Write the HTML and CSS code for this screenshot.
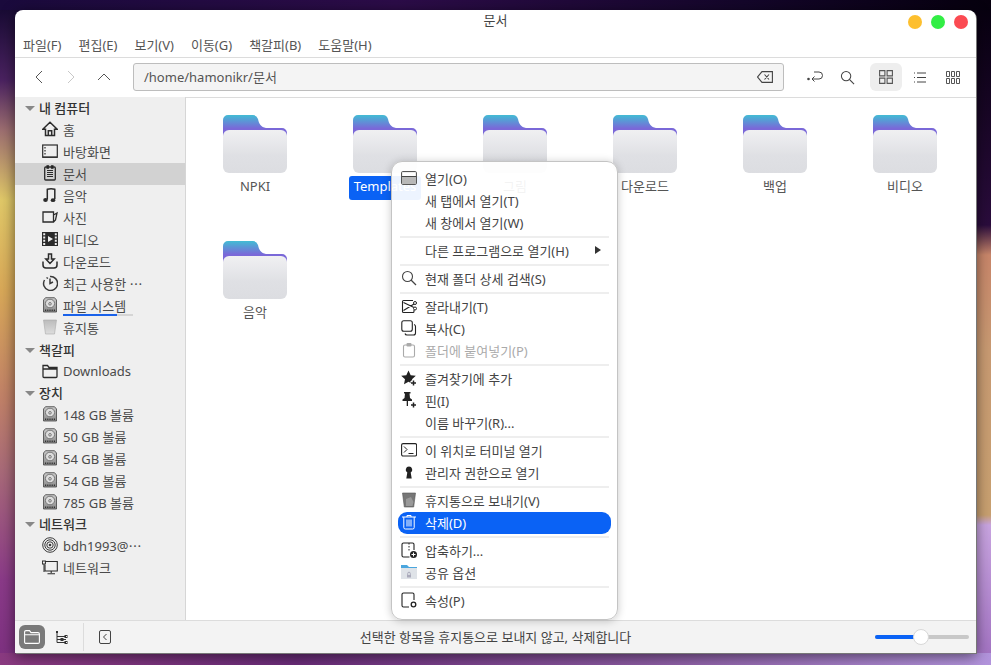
FILE: index.html
```html
<!DOCTYPE html>
<html lang="ko">
<head>
<meta charset="utf-8">
<title>문서</title>
<link rel="stylesheet" href="styles.css">
</head>
<body>
<svg class="defs" width="0" height="0" aria-hidden="true">
  <defs>
    <linearGradient id="tabg" x1="0" y1="0" x2="0" y2="1"><stop offset="0" stop-color="#42bcd4"/><stop offset=".42" stop-color="#7a68d8"/></linearGradient>
    <linearGradient id="frontg" x1="0" y1="0" x2="0" y2="1"><stop offset="0" stop-color="#f0f0f2"/><stop offset=".6" stop-color="#dfe0e4"/><stop offset="1" stop-color="#dcdde1"/></linearGradient>
    <linearGradient id="diskg" x1="0" y1="0" x2="0" y2="1"><stop offset="0" stop-color="#c8c8c8"/><stop offset="1" stop-color="#8a8a8a"/></linearGradient>
    <linearGradient id="trashg" x1="0" y1="0" x2="0" y2="1"><stop offset="0" stop-color="#bbb"/><stop offset="1" stop-color="#ddd"/></linearGradient>
    <symbol id="folder" viewBox="0 0 64 58">
      <path fill="url(#tabg)" d="M0 5a5 5 0 0 1 5-5h24a6 6 0 0 1 6 4c1 5 3 8 8 9h16a5 5 0 0 1 5 5v14H0z"/>
      <rect y="15" width="64" height="43" rx="6" fill="url(#frontg)"/>
    </symbol>
    <symbol id="i-home" viewBox="0 0 16 16"><path fill="none" stroke="#2b2b2b" stroke-width="1.5" d="M8 1.200 .8 8.300h2.700v6.200h9V8.300h2.700zM6.300 14.500V9.800h3.400v4.700"/></symbol>
    <symbol id="i-desk" viewBox="0 0 16 16"><rect x=".7" y="2" width="14.6" height="12.3" fill="none" stroke="#2b2b2b" stroke-width="1.2"/><path stroke="#2b2b2b" stroke-width="1.2" d="M3 4v1.500M3 7v1.500M3 10v1.500M1 14h14"/></symbol>
    <symbol id="i-doc" viewBox="0 0 16 16"><rect x="2.7" y="2" width="10.6" height="13" rx="1" fill="none" stroke="#2b2b2b" stroke-width="1.3"/><path stroke="#2b2b2b" stroke-width="1.2" d="M5 .8h1.500v2.400H5zM9.500 .8H11v2.400H9.500zM5 5.500h6M5 7.500h6M5 9.500h6M5 11.500h6"/></symbol>
    <symbol id="i-music" viewBox="0 0 16 16"><path fill="none" stroke="#2b2b2b" stroke-width="1.5" d="M5.300 12.500V2.300c2.500-.6 5-.6 7.500 0v10"/><ellipse cx="3.500" cy="13" rx="2.300" ry="1.900" fill="#2b2b2b"/><ellipse cx="11" cy="13.200" rx="2.300" ry="1.900" fill="#2b2b2b"/></symbol>
    <symbol id="i-photo" viewBox="0 0 16 16"><path fill="none" stroke="#2b2b2b" stroke-width="1.300" d="M1 3h10.500v10H1zM11.500 6l3.500-2-1.500 7-2 2"/></symbol>
    <symbol id="i-video" viewBox="0 0 16 16"><path fill="#2b2b2b" fill-rule="evenodd" d="M0 1h16v14H0zM1.200 2.200v2h2v-2zM1.200 5.500v2h2v-2zM1.200 8.800v2h2v-2zM1.200 12v2h2v-2zM12.800 2.200v2h2v-2zM12.800 5.500v2h2v-2zM12.800 8.800v2h2v-2zM12.800 12v2h2v-2zM6 5v6l5-3z"/></symbol>
    <symbol id="i-down" viewBox="0 0 16 16"><path fill="none" stroke="#2b2b2b" stroke-width="1.500" d="M6.500 1v5H3.800L8 10.500 12.200 6H9.500V1zM1 8.500v3.500a3 3 0 0 0 3 3h8a3 3 0 0 0 3-3V8.500"/></symbol>
    <symbol id="i-recent" viewBox="0 0 16 16"><path fill="none" stroke="#3a3a3a" stroke-width="1.500" d="M4.500 2.500l1.500 1M2.500 5A7 7 0 1 0 8 1.500M8 3.500v5l3-1.500"/></symbol>
    <symbol id="i-disk" viewBox="0 0 16 16"><path fill="url(#diskg)" stroke="#444" stroke-width=".8" d="M3.500.7h9l2 2.300v12H1.500V3z"/><ellipse cx="8" cy="6.500" rx="4.600" ry="4.300" fill="#ddd" stroke="#777"/><circle cx="8" cy="6.800" r="1.300" fill="none" stroke="#777"/><path stroke="#333" stroke-width="1.600" stroke-dasharray="1 .8" d="M3 13.200h10"/></symbol>
    <symbol id="i-trash" viewBox="0 0 16 16"><path fill="url(#trashg)" stroke="#aaa" stroke-width=".6" d="M1.500 1h13L12.500 15h-9z"/></symbol>
    <symbol id="i-folder" viewBox="0 0 16 16"><path fill="none" stroke="#2b2b2b" stroke-width="1.300" d="M1 13.500V2.500h4.500L7 4.500h8v9a1 1 0 0 1-1 1H2a1 1 0 0 1-1-1zM1 6h14"/></symbol>
    <symbol id="i-remote" viewBox="0 0 16 16"><g fill="none" stroke="#3a3a3a"><circle cx="8" cy="8" r="7.300"/><circle cx="8" cy="8" r="5.200"/><circle cx="8" cy="8" r="3.200"/></g><circle cx="8" cy="8" r="1.300" fill="#3a3a3a"/></symbol>
    <symbol id="i-net" viewBox="0 0 16 16"><path fill="none" stroke="#2b2b2b" stroke-width="1.100" d="M3 2.500h12.300v9.500H3V6M9.200 12v2M5.500 14.800h7.500"/><rect x=".4" y="2" width="3" height="3" fill="none" stroke="#2b2b2b"/><path stroke="#2b2b2b" d="M2 5v8"/></symbol>
    <symbol id="m-open" viewBox="0 0 16 16"><rect x=".6" y="1.600" width="14.800" height="12.800" rx="1" fill="#fff" stroke="#444"/><rect x="1" y="7" width="14" height="7" fill="#b8b8b8"/><path stroke="#444" d="M1 6.500h14"/></symbol>
    <symbol id="m-search" viewBox="0 0 16 16"><circle cx="6.500" cy="6.500" r="5" fill="none" stroke="#444" stroke-width="1.100"/><path stroke="#444" stroke-width="1.200" d="M10 10l5 5"/></symbol>
    <symbol id="m-cut" viewBox="0 0 16 16"><path fill="none" stroke="#222" stroke-width="1.100" d="M12 2.500H2.500a1 1 0 0 0-1 1v10a1 1 0 0 0 1 1H12a1 1 0 0 0 1-1V12M2.500 4.500l10.500 5M2.500 12.500 13 6"/><circle cx="14" cy="5" r="1.500" fill="#fff" stroke="#222"/><circle cx="14" cy="10.500" r="1.500" fill="#fff" stroke="#222"/></symbol>
    <symbol id="m-copy" viewBox="0 0 16 16"><rect x=".8" y=".8" width="10.500" height="10.500" rx="2" fill="none" stroke="#222" stroke-width="1.100"/><path fill="none" stroke="#222" stroke-width="1.100" d="M13 4.500a2 2 0 0 1 1.500 2v6.500a2 2 0 0 1-2 2H6a2 2 0 0 1-2-1.500"/></symbol>
    <symbol id="m-paste" viewBox="0 0 16 16"><rect x="2.500" y="3" width="11" height="12" rx="1.500" fill="none" stroke="#aaa" stroke-width="1.100"/><rect x="5.500" y="1" width="5" height="3.500" rx="1" fill="#aaa"/></symbol>
    <symbol id="m-star" viewBox="0 0 16 16"><path fill="#222" d="M7.500 .5l2.200 4.700 5.100.6-3.800 3.500 1 5-4.500-2.500L3 14.300l1-5L.2 5.800l5.100-.6z"/><path stroke="#fff" stroke-width="4" d="M12.500 10v6M9.500 13h6"/><path stroke="#222" stroke-width="1.500" d="M12.500 10.500v5M10 13h5"/></symbol>
    <symbol id="m-pin" viewBox="0 0 16 16"><path fill="#222" d="M3 0h6.500v1.500H8.500l.5 4.500 2 1.500v1.500H7v5H5.700V9H1.500V7.500l2-1.500L4 1.500H3z"/><path stroke="#222" stroke-width="1.500" d="M12.500 10.500v5M10 13h5"/></symbol>
    <symbol id="m-term" viewBox="0 0 16 16"><rect x=".6" y="1.600" width="15" height="12.400" rx="1.500" fill="none" stroke="#222" stroke-width="1.100"/><path fill="none" stroke="#222" d="M3 4.500l3 3-3 3M7.500 11.500h5"/></symbol>
    <symbol id="m-key" viewBox="0 0 16 16"><path fill="#222" d="M8 2.500a3.300 3.300 0 0 1 1.700 6.100l1 5.900H5.300l1-5.900A3.300 3.300 0 0 1 8 2.500z"/></symbol>
    <symbol id="m-bin" viewBox="0 0 16 16"><path fill="#777" stroke="#555" stroke-width=".6" d="M1.500 1h13l-1.800 14H3.300z"/><path fill="#999" d="M5 7l5-2 2.500 5-1 4H5z"/></symbol>
    <symbol id="m-del" viewBox="0 0 16 16"><path fill="none" stroke="#fff" d="M1 3h14M6 3V1.500h4V3M2.800 3v10.500A1.500 1.500 0 0 0 4.300 15h7.400a1.500 1.500 0 0 0 1.500-1.500V3M6 5.500v7M8 5.500v7M10 5.500v7"/></symbol>
    <symbol id="m-zip" viewBox="0 0 16 16"><path fill="none" stroke="#222" stroke-width="1.100" d="M8.500 15H2.500a1.500 1.500 0 0 1-1.500-1.500v-11A1.500 1.500 0 0 1 2.500 1h9A1.500 1.500 0 0 1 13 2.500V8"/><path stroke="#222" stroke-dasharray="1.500 1.500" d="M8 1v9"/><circle cx="12.500" cy="12.500" r="3.500" fill="#222"/><path stroke="#fff" d="M12.500 10.500v4M10.500 12.500h4"/></symbol>
    <symbol id="m-share" viewBox="0 0 16 16"><path fill="#4aa6de" d="M0 1h6l2 2h8v3H0z"/><rect y="4" width="16" height="11" fill="#dfe3e8"/><path fill="#aab" d="M6 11h4v2.500H6z"/><path fill="none" stroke="#aab" d="M6.700 11V9.500a1.300 1.300 0 0 1 2.600 0V11"/></symbol>
    <symbol id="m-prop" viewBox="0 0 16 16"><path fill="none" stroke="#222" stroke-width="1.100" d="M8 15H2.500A1.500 1.500 0 0 1 1 13.500v-11A1.500 1.500 0 0 1 2.500 1h9A1.500 1.500 0 0 1 13 2.500V8"/><circle cx="12.500" cy="12.500" r="2.300" fill="#fff" stroke="#222" stroke-width="1.300"/></symbol>
  </defs>
</svg>

<div class="window">
  <header class="titlebar">
    <div></div>
    <div class="title">문서</div>
    <div class="dots"><span class="dot yellow"></span><span class="dot green"></span><span class="dot red"></span></div>
  </header>
  <nav class="menubar">
    <span>파일(F)</span><span>편집(E)</span><span>보기(V)</span><span>이동(G)</span><span>책갈피(B)</span><span>도움말(H)</span>
  </nav>
  <div class="toolbar">
    <button class="tbtn"><svg width="16" height="16" viewBox="0 0 16 16"><path fill="none" stroke="#555" d="M12 2 6 8l6 6"/></svg></button>
    <button class="tbtn"><svg width="16" height="16" viewBox="0 0 16 16"><path fill="none" stroke="#c8c8c8" d="M5 2l6 6-6 6"/></svg></button>
    <button class="tbtn"><svg width="16" height="16" viewBox="0 0 16 16"><path fill="none" stroke="#555" d="M2 11l6-6 6 6"/></svg></button>
    <div class="address">
      <span>/home/hamonikr/문서</span>
      <svg width="16" height="12" viewBox="0 0 16 12"><path fill="none" stroke="#444" stroke-width="1.100" d="M5 .6h10.400v10.800H5L.6 6zM7.500 3.500l4.500 5M12 3.500l-4.500 5"/></svg>
    </div>
    <button class="tbtn first"><svg width="16" height="12" viewBox="0 0 16 12"><circle cx="1.500" cy="8" r="1.300" fill="#444"/><path fill="none" stroke="#444" d="M7 1h5a3.500 3.500 0 0 1 0 7H5M7.500 5.500 5 8l2.500 2.500"/></svg></button>
    <button class="tbtn"><svg width="15" height="15" viewBox="0 0 16 16"><use href="#m-search"/></svg></button>
    <button class="tbtn active"><svg width="14" height="14" viewBox="0 0 14 14"><path fill="none" stroke="#555" stroke-width="1.100" d="M.6.600h5.300v5.300H.6zM8.100.600h5.300v5.300H8.100zM.6 8.100h5.300v5.300H.6zM8.100 8.100h5.300v5.300H8.100z"/></svg></button>
    <button class="tbtn"><svg width="12" height="11" viewBox="0 0 12 11"><path stroke="#444" d="M0 1h1M3 1h9M0 5.500h1M3 5.500h9M0 10h1M3 10h9"/></svg></button>
    <button class="tbtn"><svg width="14" height="13" viewBox="0 0 14 13"><path fill="none" stroke="#555" d="M.5.500h3v5h-3zM5.500.500h3v5h-3zM10.500.500h3v5h-3zM.5 7.500h3v5h-3zM5.500 7.500h3v5h-3zM10.500 7.500h3v5h-3z"/></svg></button>
  </div>

  <div class="main">
    <aside class="sidebar">
      <div class="shead"><i class="tri"></i>내 컴퓨터</div>
      <div class="sitem"><svg class="ic"><use href="#i-home"/></svg>홈</div>
      <div class="sitem"><svg class="ic"><use href="#i-desk"/></svg>바탕화면</div>
      <div class="sitem current"><svg class="ic"><use href="#i-doc"/></svg>문서</div>
      <div class="sitem"><svg class="ic"><use href="#i-music"/></svg>음악</div>
      <div class="sitem"><svg class="ic"><use href="#i-photo"/></svg>사진</div>
      <div class="sitem"><svg class="ic"><use href="#i-video"/></svg>비디오</div>
      <div class="sitem"><svg class="ic"><use href="#i-down"/></svg>다운로드</div>
      <div class="sitem"><svg class="ic"><use href="#i-recent"/></svg>최근 사용한 ⋯</div>
      <div class="sitem usage"><svg class="ic"><use href="#i-disk"/></svg>파일 시스템<span class="usagebar"><span class="usagefill"></span></span></div>
      <div class="sitem"><svg class="ic"><use href="#i-trash"/></svg>휴지통</div>
      <div class="shead"><i class="tri"></i>책갈피</div>
      <div class="sitem"><svg class="ic"><use href="#i-folder"/></svg>Downloads</div>
      <div class="shead short"><i class="tri"></i>장치</div>
      <div class="sitem"><svg class="ic"><use href="#i-disk"/></svg>148 GB 볼륨</div>
      <div class="sitem"><svg class="ic"><use href="#i-disk"/></svg>50 GB 볼륨</div>
      <div class="sitem"><svg class="ic"><use href="#i-disk"/></svg>54 GB 볼륨</div>
      <div class="sitem"><svg class="ic"><use href="#i-disk"/></svg>54 GB 볼륨</div>
      <div class="sitem"><svg class="ic"><use href="#i-disk"/></svg>785 GB 볼륨</div>
      <div class="shead short"><i class="tri"></i>네트워크</div>
      <div class="sitem"><svg class="ic"><use href="#i-remote"/></svg>bdh1993@⋯</div>
      <div class="sitem"><svg class="ic"><use href="#i-net"/></svg>네트워크</div>
    </aside>
    <section class="files">
      <div class="cell"><svg class="fld"><use href="#folder"/></svg><span class="lbl">NPKI</span></div>
      <div class="cell"><svg class="fld"><use href="#folder"/></svg><span class="lbl sel">Templates</span></div>
      <div class="cell"><svg class="fld"><use href="#folder"/></svg><span class="lbl">그림</span></div>
      <div class="cell"><svg class="fld"><use href="#folder"/></svg><span class="lbl">다운로드</span></div>
      <div class="cell"><svg class="fld"><use href="#folder"/></svg><span class="lbl">백업</span></div>
      <div class="cell"><svg class="fld"><use href="#folder"/></svg><span class="lbl">비디오</span></div>
      <div class="cell"><svg class="fld"><use href="#folder"/></svg><span class="lbl">음악</span></div>
    </section>
  </div>

  <footer class="status">
    <div class="st-left">
      <button class="sbtn on"><svg width="16" height="14" viewBox="0 0 16 14"><path fill="none" stroke="#fff" stroke-width="1.100" d="M.6 12V2a1.400 1.400 0 0 1 1.400-1.400h3.500l1.500 2H14A1.400 1.400 0 0 1 15.400 4v8a1.400 1.400 0 0 1-1.400 1.400H2A1.400 1.400 0 0 1 .6 12zM.6 4.800h14.800"/></svg></button>
      <button class="sbtn"><svg width="12" height="13" viewBox="0 0 12 13"><path fill="none" stroke="#333" d="M1 1.500v10h9M1 5.500h9M1 8.500h9"/><rect x="0" y="0" width="2" height="2" fill="#333"/><rect x="9" y="4.500" width="2" height="2" fill="none" stroke="#333"/><rect x="5" y="7.500" width="2" height="2" fill="none" stroke="#333"/><rect x="9" y="10.500" width="2" height="2" fill="none" stroke="#333"/></svg></button>
      <span class="vsep"></span>
      <button class="sbtn"><svg width="12" height="14" viewBox="0 0 12 14"><rect x=".5" y=".5" width="11" height="13" rx="1.500" fill="none" stroke="#444"/><path fill="none" stroke="#444" d="M7.500 4 4.500 7l3 3"/></svg></button>
    </div>
    <div class="st-text">선택한 항목을 휴지통으로 보내지 않고, 삭제합니다</div>
    <div class="st-right"><div class="slider"><span class="s-fill"></span><span class="s-knob"></span></div></div>
  </footer>

  <div class="menu">
    <div class="mi"><svg class="mic"><use href="#m-open"/></svg>열기(O)</div>
    <div class="mi"><span class="mic"></span>새 탭에서 열기(T)</div>
    <div class="mi"><span class="mic"></span>새 창에서 열기(W)</div>
    <hr class="msep">
    <div class="mi"><span class="mic"></span>다른 프로그램으로 열기(H)<i class="sub"></i></div>
    <hr class="msep">
    <div class="mi"><svg class="mic"><use href="#m-search"/></svg>현재 폴더 상세 검색(S)</div>
    <hr class="msep">
    <div class="mi"><svg class="mic"><use href="#m-cut"/></svg>잘라내기(T)</div>
    <div class="mi"><svg class="mic"><use href="#m-copy"/></svg>복사(C)</div>
    <div class="mi off"><svg class="mic"><use href="#m-paste"/></svg>폴더에 붙여넣기(P)</div>
    <hr class="msep">
    <div class="mi"><svg class="mic"><use href="#m-star"/></svg>즐겨찾기에 추가</div>
    <div class="mi"><svg class="mic"><use href="#m-pin"/></svg>핀(I)</div>
    <div class="mi"><span class="mic"></span>이름 바꾸기(R)...</div>
    <hr class="msep">
    <div class="mi"><svg class="mic"><use href="#m-term"/></svg>이 위치로 터미널 열기</div>
    <div class="mi"><svg class="mic"><use href="#m-key"/></svg>관리자 권한으로 열기</div>
    <hr class="msep">
    <div class="mi"><svg class="mic"><use href="#m-bin"/></svg>휴지통으로 보내기(V)</div>
    <div class="mi hot"><svg class="mic"><use href="#m-del"/></svg>삭제(D)</div>
    <hr class="msep">
    <div class="mi"><svg class="mic"><use href="#m-zip"/></svg>압축하기...</div>
    <div class="mi"><svg class="mic"><use href="#m-share"/></svg>공유 옵션</div>
    <hr class="msep">
    <div class="mi"><svg class="mic"><use href="#m-prop"/></svg>속성(P)</div>
  </div>
</div>
</body>
</html>
```

FILE: styles.css
```css
* { box-sizing: border-box; }
html, body { height: 100%; }
body {
  margin: 0;
  padding: 10px 0 0 15px;
  overflow: hidden;
  font-family: "Noto Sans", "Noto Sans CJK KR", sans-serif;
  font-size: 13px;
  color: #444;
  background-color: #2a0a45;
  background-repeat: no-repeat;
  background-image:
    linear-gradient(90deg, #1a0a3c 0%, #2c0c48 40%, #14062a 75%, #06000e 100%),
    linear-gradient(90deg, #8a3a80 0%, #6a2c78 30%, #8a5aa0 65%, #b294dc 100%),
    linear-gradient(180deg, #12082e 0, #4a2260 80px, #9c6e70 130px, #e0c868 200px, #d8a858 290px, #c08068 400px, #a86a78 470px, #8a3a88 580px, #7c3080 665px),
    linear-gradient(180deg, #06000e 0, #2a0c3c 225px, #c8866a 255px, #c89a72 350px, #c8a070 515px, #c8a4e0 525px, #a070c0 665px);
  background-size: 100% 10px, 100% 12px, 50% 100%, 50% 100%;
  background-position: top left, bottom left, left top, right top;
}
.defs { position: absolute; }
button { border: 0; background: none; padding: 0; display: flex; align-items: center; justify-content: center; }

.window {
  position: relative;
  display: flex;
  flex-direction: column;
  width: 961px;
  height: 643px;
  background: #fff;
  border-radius: 8px 8px 0 0;
  box-shadow: 1px 1px 0 #777, 0 3px 14px rgba(0, 0, 0, .55);
}

.titlebar {
  display: grid;
  grid-template-columns: 1fr auto 1fr;
  align-items: start;
  height: 24px;
}
.title { line-height: 20px; color: #444; }
.dots { display: flex; justify-content: flex-end; gap: 9px; padding: 5px 8px 0 0; }
.dot { width: 14px; height: 14px; border-radius: 50%; }
.yellow { background: #fdbf2e; }
.green { background: #32ee45; }
.red { background: #fb4a52; }

.menubar {
  display: flex;
  gap: 17px;
  height: 24px;
  padding: 0 0 0 8px;
  line-height: 22px;
  color: #555;
  border-bottom: 1px solid #dcdcdc;
}

.toolbar {
  display: flex;
  align-items: center;
  height: 40px;
  padding: 0 7px 1px 6px;
  border-bottom: 1px solid #dcdcdc;
}
.tbtn { width: 33px; height: 28px; flex: none; }
.tbtn.first { margin-left: 14px; }
.tbtn.active { width: 32px; margin: 0 1px 0 6px; background: #eeeeee; border-radius: 6px; }
.address {
  flex: 1;
  display: flex;
  align-items: center;
  justify-content: space-between;
  height: 28px;
  margin-left: 13px;
  padding: 0 10px 1px;
  background: #f4f4f4;
  border: 1px solid #bdbdbd;
  border-radius: 3px;
  color: #555;
}

.main { flex: 1; display: flex; min-height: 0; }
.sidebar {
  width: 171px;
  flex: none;
  margin-top: -1px;
  background: #efefef;
  border-right: 1px solid #d6d6d6;
}
.shead, .sitem { display: flex; align-items: center; height: 22px; padding-bottom: 2px; white-space: nowrap; }
.shead { padding-left: 10px; font-weight: 500; color: #333; }
.shead.short { height: 21px; }
.tri {
  width: 0;
  height: 0;
  margin: 2px 4px 0 0;
  border-left: 5px solid transparent;
  border-right: 5px solid transparent;
  border-top: 5px solid #888;
}
.sitem { position: relative; padding-left: 27px; color: #4a4a4a; }
.sitem.current { background: #d2d2d2; }
.ic { width: 16px; height: 16px; margin-right: 5px; flex: none; }
.usagebar {
  position: absolute;
  left: 48px;
  bottom: 1px;
  width: 70px;
  height: 2px;
  background: #d5d5d5;
}
.usagefill { display: block; width: 54px; height: 2px; background: #1a62ea; }

.files {
  flex: 1;
  display: grid;
  grid-template-columns: repeat(6, 130px);
  grid-auto-rows: 126px;
  align-content: start;
  padding: 17px 0 0 4px;
}
.cell { display: flex; flex-direction: column; align-items: center; }
.fld { width: 64px; height: 58px; }
.lbl { margin-top: 3px; height: 24px; padding: 0 5px; line-height: 21px; color: #555; }
.lbl.sel { background: #0a62f5; color: #fff; border-radius: 3px; }

.status {
  display: grid;
  grid-template-columns: 1fr auto 1fr;
  align-items: center;
  height: 33px;
  flex: none;
  background: #f3f3f3;
  border-top: 1px solid #dcdcdc;
}
.st-left { display: flex; align-items: center; padding-left: 4px; }
.sbtn { width: 26px; height: 24px; margin-right: 4px; border-radius: 6px; }
.sbtn.on { background: #7a7a7a; }
.vsep { width: 1px; height: 28px; margin: 0 8px 0 4px; background: #dcdcdc; }
.st-text { padding-bottom: 2px; color: #444; }
.st-right { display: flex; justify-content: flex-end; padding-right: 7px; }
.slider { position: relative; width: 94px; height: 4px; background: #c8c8c8; border-radius: 2px; }
.s-fill { display: block; width: 42px; height: 4px; background: #0a62f5; border-radius: 2px; }
.s-knob {
  position: absolute;
  left: 38px;
  top: -6px;
  width: 16px;
  height: 16px;
  border-radius: 50%;
  background: #fff;
  border: 1px solid #d8d8d8;
}

.menu {
  position: absolute;
  left: 376px;
  top: 151px;
  width: 227px;
  padding: 6px 6px 7px;
  background: rgba(255, 255, 255, .93);
  border: 1px solid #c4c4c4;
  border-radius: 11px;
  box-shadow: 0 1px 8px rgba(0, 0, 0, .22);
}
.mi {
  display: flex;
  align-items: center;
  height: 22px;
  padding: 0 0 2px 3px;
  color: #444;
  border-radius: 9px;
  white-space: nowrap;
}
.mic { display: block; width: 16px; height: 16px; margin-right: 8px; flex: none; }
.mi.off { color: #aaa; }
.mi.hot { background: #0a62f5; color: #fff; }
.sub {
  margin-left: auto;
  margin-right: 10px;
  border-top: 4px solid transparent;
  border-bottom: 4px solid transparent;
  border-left: 6px solid #333;
}
.msep { height: 2px; margin: 2px 2px; border: 0; background: #eeeeee; }
```
